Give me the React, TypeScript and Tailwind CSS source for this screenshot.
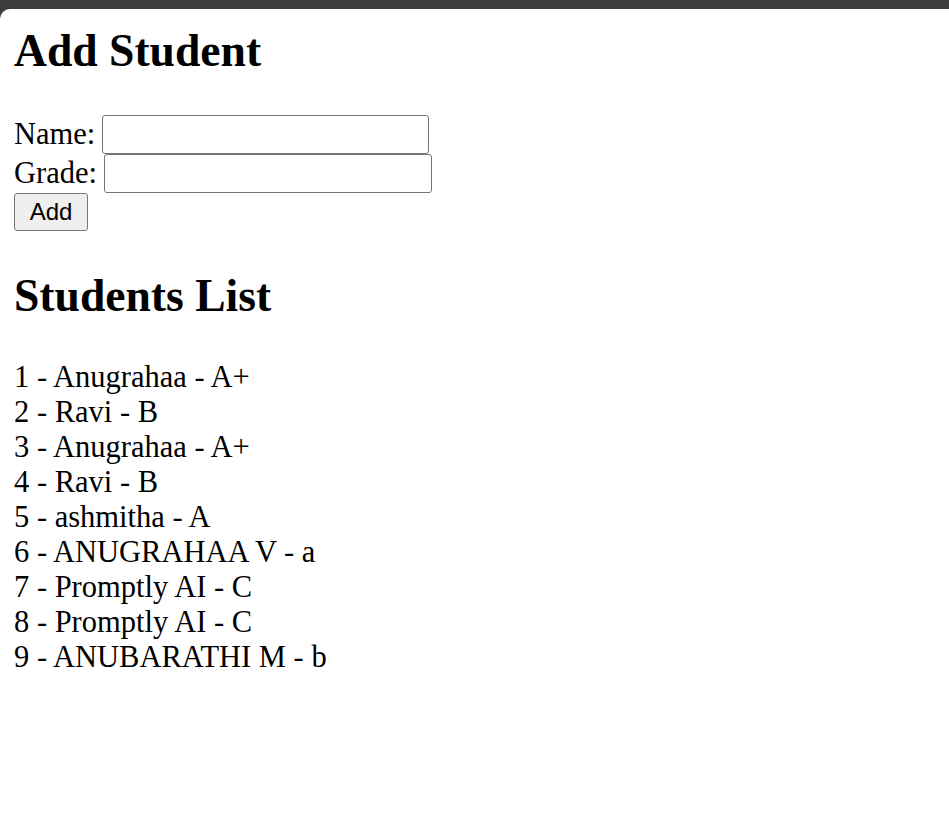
import React from "react";

const students = [
  "1 - Anugrahaa - A+",
  "2 - Ravi - B",
  "3 - Anugrahaa - A+",
  "4 - Ravi - B",
  "5 - ashmitha - A",
  "6 - ANUGRAHAA V - a",
  "7 - Promptly AI - C",
  "8 - Promptly AI - C",
  "9 - ANUBARATHI M - b",
];

export default function App() {
  return (
    <div className="min-h-screen bg-[#3c3c3c] pt-[9px]">
      <div className="min-h-[811px] rounded-tl-[10px] bg-white px-[14px] pt-[16px] text-[30.5px] leading-[1.15] text-black font-['Liberation_Serif','Times_New_Roman',serif]">
        <h1 className="m-0 text-[45.6px] font-bold leading-[1.15]">Add Student</h1>
        <div className="mt-[38px] flex flex-col">
          <div className="flex h-[39px] items-center">
            <span>Name:</span>
            <input
              type="text"
              className="ml-[7px] h-[39px] w-[327px] rounded-[3px] border border-[#767676] bg-white"
            />
          </div>
          <div className="flex h-[39px] items-center">
            <span>Grade:</span>
            <input
              type="text"
              className="ml-[7px] h-[39px] w-[328px] rounded-[3px] border border-[#767676] bg-white"
            />
          </div>
          <div className="flex">
            <button className="h-[38px] w-[74px] rounded-[3px] border border-[#767676] bg-[#efefef] text-[24px] leading-none text-black font-['Liberation_Sans',Arial,sans-serif]">
              Add
            </button>
          </div>
        </div>
        <h2 className="mt-[39px] text-[45.6px] font-bold leading-[1.15]">Students List</h2>
        <div className="mt-[37px] flex flex-col">
          {students.map((s) => (
            <div key={s} className="leading-[35px]">
              {s}
            </div>
          ))}
        </div>
      </div>
    </div>
  );
}
